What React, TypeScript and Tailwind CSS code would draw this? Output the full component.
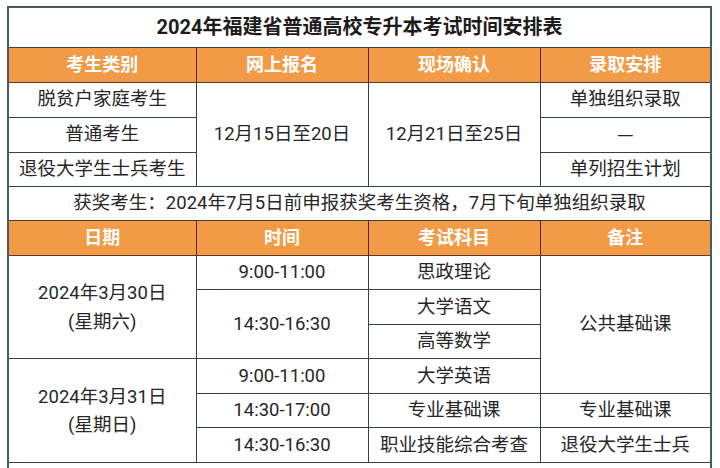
import React from 'react';

const td = 'border-[1.5px] border-[#34414b] text-center align-middle p-0';
const th = 'border-[1.5px] border-[#5a3a22] border-x-[#4a2c18] bg-[#f29a45] text-white text-[18px] font-bold text-center align-middle p-0';

export default function App() {
  return (
    <div className="w-[720px] h-[468px] overflow-hidden bg-white pt-[6px] pl-[7px] font-['Roboto','Noto_Sans_CJK_SC',sans-serif] text-[18.5px] text-[#262626] leading-none">
      <table className="border-collapse table-fixed w-[703px] border-2 border-[#4b5963]">
        <colgroup>
          <col className="w-[188px]" />
          <col className="w-[172px]" />
          <col className="w-[172px]" />
          <col className="w-[171px]" />
        </colgroup>
        <tbody>
          <tr className="h-[40px]">
            <td colSpan={4} className={`${td} text-[20px] font-bold text-[#1c1c1c]`}>
              2024年福建省普通高校专升本考试时间安排表
            </td>
          </tr>
          <tr className="h-[35px]">
            <td className={th}>考生类别</td>
            <td className={th}>网上报名</td>
            <td className={th}>现场确认</td>
            <td className={th}>录取安排</td>
          </tr>
          <tr className="h-[35px]">
            <td className={td}>脱贫户家庭考生</td>
            <td rowSpan={3} className={td}>12月15日至20日</td>
            <td rowSpan={3} className={td}>12月21日至25日</td>
            <td className={td}>单独组织录取</td>
          </tr>
          <tr className="h-[35px]">
            <td className={td}>普通考生</td>
            <td className={td}>
              <span className="font-['Noto_Sans_CJK_SC',sans-serif]">—</span>
            </td>
          </tr>
          <tr className="h-[34px]">
            <td className={td}>退役大学生士兵考生</td>
            <td className={td}>单列招生计划</td>
          </tr>
          <tr className="h-[34px]">
            <td colSpan={4} className={td}>获奖考生：2024年7月5日前申报获奖考生资格，7月下旬单独组织录取</td>
          </tr>
          <tr className="h-[35px]">
            <td className={th}>日期</td>
            <td className={th}>时间</td>
            <td className={th}>考试科目</td>
            <td className={th}>备注</td>
          </tr>
          <tr className="h-[34.5px]">
            <td rowSpan={3} className={td}>
              <div className="flex flex-col items-center gap-[10px] pt-[2px]">
                <span>2024年3月30日</span>
                <span>(星期六)</span>
              </div>
            </td>
            <td className={td}>9:00-11:00</td>
            <td className={td}>思政理论</td>
            <td rowSpan={4} className={td}>公共基础课</td>
          </tr>
          <tr className="h-[34.5px]">
            <td rowSpan={2} className={td}>14:30-16:30</td>
            <td className={td}>大学语文</td>
          </tr>
          <tr className="h-[34.5px]">
            <td className={td}>高等数学</td>
          </tr>
          <tr className="h-[34.5px]">
            <td rowSpan={3} className={td}>
              <div className="flex flex-col items-center gap-[10px] pt-[2px]">
                <span>2024年3月31日</span>
                <span>(星期日)</span>
              </div>
            </td>
            <td className={td}>9:00-11:00</td>
            <td className={td}>大学英语</td>
          </tr>
          <tr className="h-[34.5px]">
            <td className={td}>14:30-17:00</td>
            <td className={td}>专业基础课</td>
            <td className={td}>专业基础课</td>
          </tr>
          <tr className="h-[34.5px]">
            <td className={td}>14:30-16:30</td>
            <td className={td}>职业技能综合考查</td>
            <td className={td}>退役大学生士兵</td>
          </tr>
          <tr className="h-[34px]">
            <td colSpan={4} className={td}></td>
          </tr>
        </tbody>
      </table>
    </div>
  );
}
